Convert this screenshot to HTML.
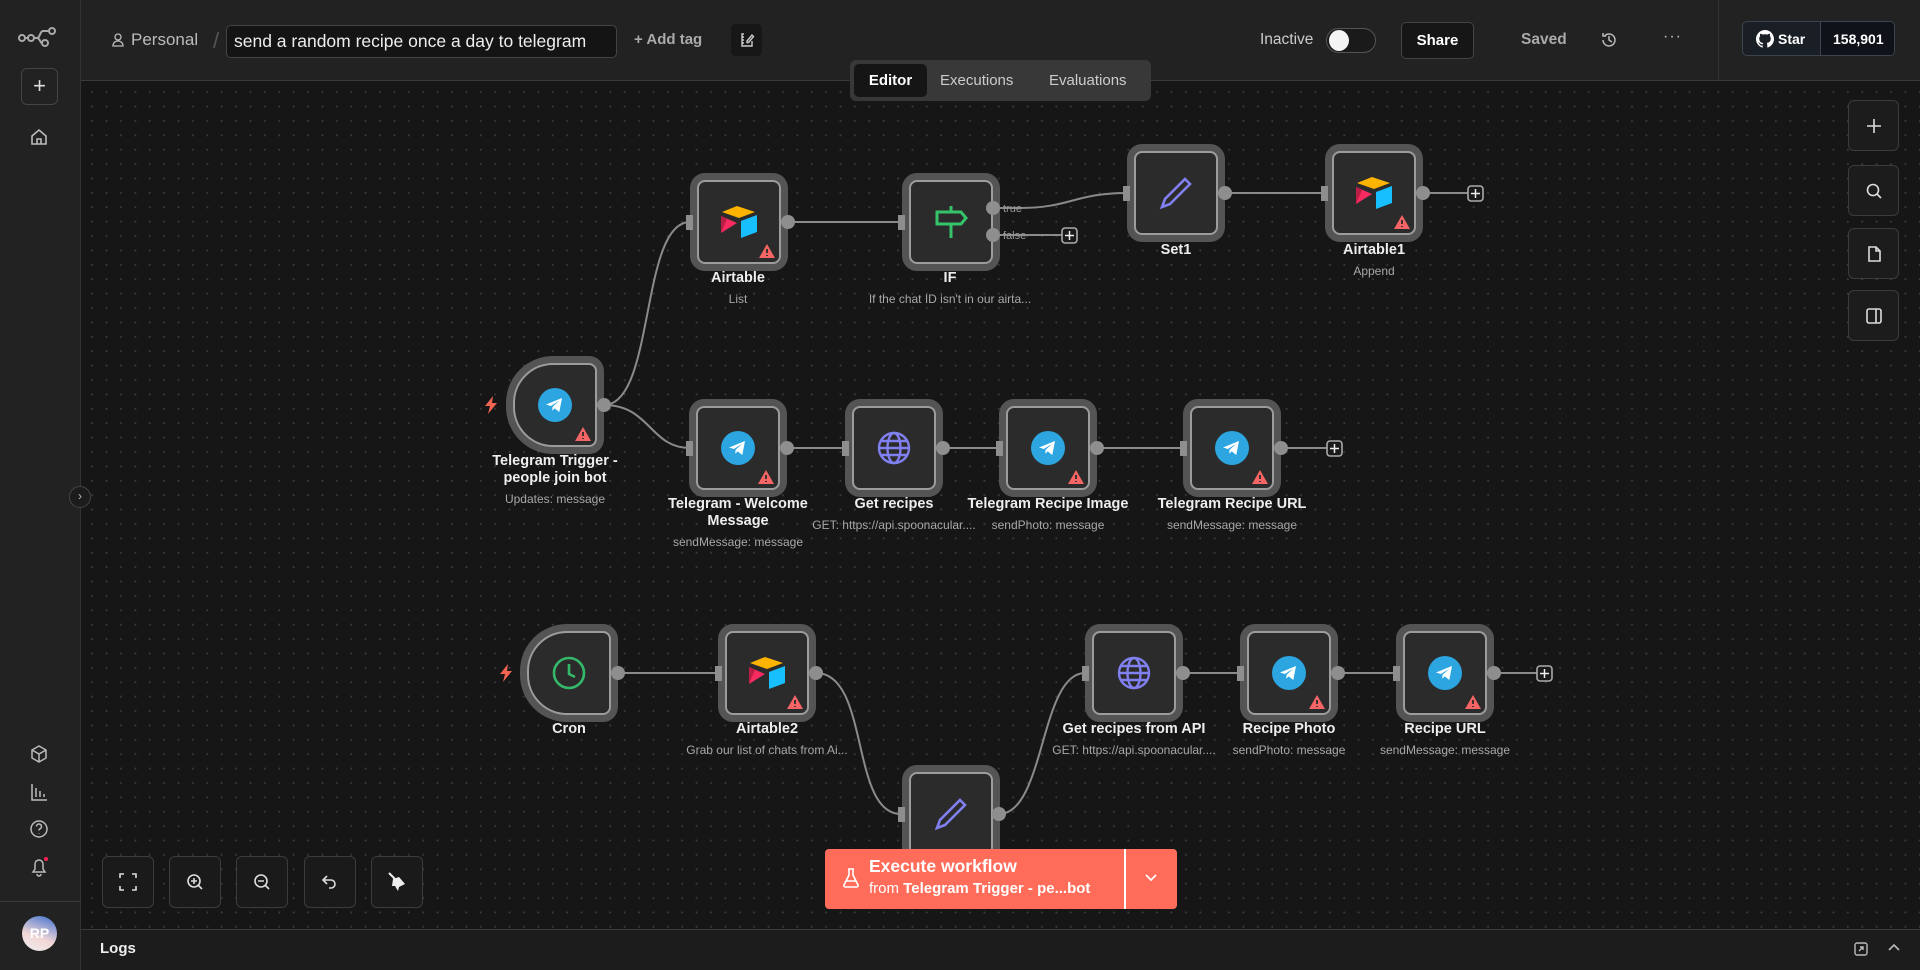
<!DOCTYPE html>
<html><head><meta charset="utf-8"><style>
*{box-sizing:border-box;margin:0;padding:0}
body{width:1920px;height:970px;overflow:hidden;background:#141414;font-family:"Liberation Sans",sans-serif;color:#ddd;position:relative}
.abs{position:absolute}
#side{left:0;top:0;width:81px;height:970px;background:#222;border-right:1px solid #333}
#head{left:81px;top:0;width:1839px;height:81px;background:#222;border-bottom:1px solid #3a3a3a}
#canvas{left:81px;top:81px;width:1839px;height:848px;background-color:#161616;background-image:radial-gradient(circle,#393939 0.9px,transparent 1.2px);background-size:14.4px 14.4px;background-position:4px 4px}
#logs{left:81px;top:929px;width:1839px;height:41px;background:#1c1c1c;border-top:1px solid #3a3a3a}
.node{position:absolute;width:84px;height:84px;background:#2b2b2b;border:2px solid #9c9c9c;border-radius:8px;box-shadow:0 0 0 7px #545454;display:flex;align-items:center;justify-content:center}
.trig{border-radius:40px 8px 8px 40px}
.lbl{position:absolute;width:200px;text-align:center;font-size:14.5px;font-weight:bold;color:#eee;line-height:17px}
.sub{display:block;font-size:12px;font-weight:normal;color:#a8a8a8;margin-top:4px}
.warn{position:absolute;right:3px;bottom:3px}
.btn{position:absolute;width:52px;height:52px;border:1px solid #3c3c3c;border-radius:6px;background:#1a1a1a;display:flex;align-items:center;justify-content:center}
.rbtn{position:absolute;left:1848px;width:51px;height:51px;border:1px solid #3c3c3c;border-radius:6px;background:#1c1c1c;display:flex;align-items:center;justify-content:center}
</style></head><body>
<div id="side" class="abs"></div>
<div id="head" class="abs"></div>
<div id="canvas" class="abs"></div>
<div id="logs" class="abs"></div>

<!-- sidebar icons -->
<svg class="abs" style="left:18px;top:26px" width="42" height="22" viewBox="0 0 42 22" fill="none" stroke="#aaa" stroke-width="2"><circle cx="4" cy="12" r="3"/><circle cx="13" cy="12" r="3"/><circle cx="27" cy="17" r="3"/><circle cx="34" cy="5" r="3"/><path d="M7 12h3M16 12h3c3 0 3-7 6-7h6M19 12c3 0 3 5 5 5"/></svg>
<div class="abs" style="left:21px;top:68px;width:37px;height:37px;border:1px solid #444;border-radius:6px;color:#ddd;font-size:22px;text-align:center;line-height:34px">+</div>
<svg class="abs" style="left:30px;top:128px" width="18" height="18" viewBox="0 0 18 18" fill="none" stroke="#bbb" stroke-width="1.6"><path d="M2 8l7-6 7 6v8H2z M7 16v-5h4v5"/></svg>
<svg class="abs" style="left:29px;top:744px" width="20" height="20" viewBox="0 0 20 20" fill="none" stroke="#bbb" stroke-width="1.5"><path d="M10 2l7 4v8l-7 4-7-4V6z M3 6l7 4 7-4 M10 10v8"/></svg>
<svg class="abs" style="left:29px;top:782px" width="20" height="20" viewBox="0 0 20 20" fill="none" stroke="#bbb" stroke-width="1.5"><path d="M3 2v16h15 M7 6v9 M11 9v6 M15 12v3"/></svg>
<svg class="abs" style="left:29px;top:819px" width="20" height="20" viewBox="0 0 20 20" fill="none" stroke="#bbb" stroke-width="1.5"><circle cx="10" cy="10" r="8"/><path d="M7.5 7.5a2.5 2.5 0 1 1 3.5 2.3c-.8.4-1 1-1 1.7M10 14v.5"/></svg>
<svg class="abs" style="left:29px;top:856px" width="22" height="22" viewBox="0 0 22 22" fill="none" stroke="#bbb" stroke-width="1.5"><path d="M4 16h12l-2-3V8a4 4 0 0 0-8 0v5z M8 18a2 2 0 0 0 4 0"/><circle cx="17" cy="3" r="2" fill="#f25" stroke="none"/></svg>
<div class="abs" style="left:0;top:901px;width:81px;height:1px;background:#3a3a3a"></div>
<div class="abs" style="left:22px;top:916px;width:35px;height:35px;border-radius:50%;background:linear-gradient(200deg,#3b6fd0,#f2d6d6 60%,#eee);color:#fff;font-weight:bold;font-size:14px;text-align:center;line-height:35px">RP</div>

<!-- header -->
<svg class="abs" style="left:112px;top:33px" width="12" height="14" viewBox="0 0 12 14" fill="none" stroke="#bbb" stroke-width="1.3"><circle cx="6" cy="4" r="3"/><path d="M1 13c0-3 2-5 5-5s5 2 5 5z"/></svg>
<div class="abs" style="left:131px;top:30px;font-size:17px;color:#bbb">Personal</div>
<div class="abs" style="left:213px;top:28px;font-size:22px;color:#555">/</div>
<div class="abs" style="left:226px;top:25px;width:391px;height:33px;border:1px solid #444;border-radius:5px;background:#141414;color:#eee;font-size:17.5px;line-height:31px;padding-left:7px;white-space:nowrap">send a random recipe once a day to telegram</div>
<div class="abs" style="left:634px;top:31px;font-size:15px;font-weight:bold;color:#aaa">+ Add tag</div>
<div class="abs" style="left:731px;top:24px;width:31px;height:32px;background:#171717;border-radius:5px"></div>
<svg class="abs" style="left:739px;top:32px" width="16" height="16" viewBox="0 0 16 16" fill="none" stroke="#ccc" stroke-width="1.4"><path d="M5 2H3v12h10V9 M3 5h2 M3 8h2 M3 11h2 M8 9l5-6 1.5 1.5-5 6H8z"/></svg>

<div class="abs" style="left:850px;top:60px;width:301px;height:41px;background:#383838;border-radius:6px"></div>
<div class="abs" style="left:854px;top:64px;width:73px;height:33px;background:#151515;border-radius:5px;color:#fff;font-weight:bold;font-size:15px;text-align:center;line-height:33px">Editor</div>
<div class="abs" style="left:940px;top:72px;font-size:15px;color:#ccc">Executions</div>
<div class="abs" style="left:1049px;top:72px;font-size:15px;color:#ccc">Evaluations</div>

<div class="abs" style="left:1260px;top:31px;font-size:15.5px;color:#ccc">Inactive</div>
<div class="abs" style="left:1326px;top:28px;width:50px;height:25px;border:1px solid #555;border-radius:13px;background:#1a1a1a"></div>
<div class="abs" style="left:1329px;top:30px;width:20px;height:21px;border-radius:50%;background:#f4f4f4"></div>
<div class="abs" style="left:1401px;top:22px;width:73px;height:37px;border:1px solid #444;border-radius:5px;background:#161616;color:#fff;font-weight:bold;font-size:15px;text-align:center;line-height:35px">Share</div>
<div class="abs" style="left:1521px;top:31px;font-size:15.5px;color:#aaa;font-weight:bold">Saved</div>
<svg class="abs" style="left:1600px;top:31px" width="18" height="18" viewBox="0 0 18 18" fill="none" stroke="#bbb" stroke-width="1.5"><path d="M3 9a6 6 0 1 0 2-4.5 M3 2v3h3 M9 5v4l3 2"/></svg>
<div class="abs" style="left:1663px;top:28px;font-size:16px;color:#bbb;letter-spacing:1px">···</div>
<div class="abs" style="left:1718px;top:0;width:1px;height:80px;background:#333"></div>
<div class="abs" style="left:1742px;top:21px;width:153px;height:35px;border:1px solid #3d4450;border-radius:5px;background:#1a1e25;overflow:hidden">
 <div class="abs" style="left:77px;top:0;width:76px;height:35px;background:#0f1218;border-left:1px solid #3d4450"></div>
 <svg class="abs" style="left:13px;top:8px" width="18" height="18" viewBox="0 0 16 16"><path fill="#fff" d="M8 0C3.6 0 0 3.6 0 8c0 3.5 2.3 6.5 5.5 7.6.4.1.5-.2.5-.4v-1.4c-2.2.5-2.7-1-2.7-1-.4-.9-.9-1.2-.9-1.2-.7-.5.1-.5.1-.5.8.1 1.2.8 1.200.8.7 1.2 1.9.9 2.3.7.1-.5.3-.9.5-1.1-1.800-.2-3.6-.9-3.6-4 0-.9.3-1.6.8-2.1-.1-.2-.4-1 .1-2.1 0 0 .7-.2 2.2.8.6-.2 1.3-.3 2-.3s1.4.1 2 .3c1.5-1 2.2-.8 2.2-.8.4 1.1.2 1.9.1 2.1.5.6.8 1.3.8 2.1 0 3.1-1.9 3.7-3.6 3.9.3.3.5.8.5 1.5v2.2c0 .2.1.5.6.4C13.7 14.5 16 11.5 16 8c0-4.4-3.6-8-8-8z"/></svg>
 <div class="abs" style="left:35px;top:9px;font-size:14px;font-weight:bold;color:#fff">Star</div>
 <div class="abs" style="left:90px;top:9px;font-size:14px;font-weight:bold;color:#fff">158,901</div>
</div>

<!-- right canvas buttons -->
<div class="rbtn" style="top:100px"><svg width="18" height="18" viewBox="0 0 18 18" stroke="#ddd" stroke-width="1.6"><path d="M9 2v14M2 9h14"/></svg></div>
<div class="rbtn" style="top:165px"><svg width="18" height="18" viewBox="0 0 18 18" fill="none" stroke="#ddd" stroke-width="1.6"><circle cx="8" cy="8" r="5.5"/><path d="M12 12l4 4"/></svg></div>
<div class="rbtn" style="top:228px"><svg width="18" height="18" viewBox="0 0 18 18" fill="none" stroke="#ddd" stroke-width="1.6"><path d="M4 2h7l4 4v10H4z M11 2v4h4"/></svg></div>
<div class="rbtn" style="top:290px"><svg width="18" height="18" viewBox="0 0 18 18" fill="none" stroke="#ddd" stroke-width="1.6"><rect x="2" y="2" width="14" height="14" rx="2"/><path d="M11 2v14"/></svg></div>

<div class="abs" style="left:69px;top:486px;width:22px;height:22px;border:1px solid #444;border-radius:50%;background:#1c1c1c;color:#bbb;font-size:12px;text-align:center;line-height:19px">›</div>

<!-- edges -->
<svg class="abs" style="left:0;top:0" width="1920" height="970" fill="none" stroke="#8a8a8a" stroke-width="2">
<path d="M604 405 C655 405 640 222 690 222"/>
<path d="M604 405 C650 405 650 448 690 448"/>
<path d="M788 222 H901"/>
<path d="M1020 208 C1070 208 1075 193 1127 193"/>
<path d="M1024 235 H1062"/>
<path d="M1225 193 H1325"/>
<path d="M1423 193 H1468"/>
<path d="M787 448 H845 M943 448 H999 M1097 448 H1183 M1281 448 H1327"/>
<path d="M618 673 H718"/>
<path d="M816 673 C870 673 850 814 901 814"/>
<path d="M999 814 C1045 814 1040 673 1085 673"/>
<path d="M1183 673 H1240 M1338 673 H1396 M1494 673 H1537"/>
<g stroke="#aaa" stroke-width="1.6" fill="#1a1a1a"><rect x="1062" y="228" width="15" height="15" rx="3"/><rect x="1468" y="186" width="15" height="15" rx="3"/><rect x="1327" y="441" width="15" height="15" rx="3"/><rect x="1537" y="666" width="15" height="15" rx="3"/></g>
<g stroke="#eee" stroke-width="1.5"><path d="M1069.5 231v9M1065 235.5h9 M1475.5 189v9M1471 193.5h9 M1334.5 444v9M1330 448.5h9 M1544.5 669v9M1540 673.5h9"/></g>
</svg>

<!-- nodes -->
<div class="node" style="left:697px;top:180px"><svg width="40" height="36" viewBox="0 0 40 36"><path d="M18 2 L36 8 L20 14 L3 8Z" fill="#fcb400"/><path d="M22 17 L38 11 V28 L22 34Z" fill="#18bfff"/><path d="M2 12 L18 19 L2 29Z" fill="#f82b60"/><path d="M2 12 L8 15 L2 29Z" fill="#ba1e45"/></svg><svg class="warn" width="18" height="16" viewBox="0 0 18 16"><path d="M9 1L17 15H1Z" fill="#f56565"/><path d="M9 6v4M9 12v1" stroke="#2b2b2b" stroke-width="1.8"/></svg></div>
<div class="lbl" style="left:638px;top:270px">Airtable<span class="sub">List</span></div>

<div class="node" style="left:909px;top:180px"><svg width="40" height="40" viewBox="0 0 40 40" fill="none" stroke="#35c46a" stroke-width="3"><path d="M20 4v6 M20 22v14 M6 10h24l5 6-5 6H6z"/></svg></div>
<div class="lbl" style="left:800px;top:270px;width:300px">IF<span class="sub">If the chat ID isn't in our airta...</span></div>

<div class="node" style="left:1134px;top:151px"><svg width="36" height="36" viewBox="0 0 36 36" fill="none" stroke="#8080f0" stroke-width="2.6"><path d="M27 4l5 5L12 29l-8 3 3-8z"/></svg></div>
<div class="lbl" style="left:1076px;top:242px">Set1</div>

<div class="node" style="left:1332px;top:151px"><svg width="40" height="36" viewBox="0 0 40 36"><path d="M18 2 L36 8 L20 14 L3 8Z" fill="#fcb400"/><path d="M22 17 L38 11 V28 L22 34Z" fill="#18bfff"/><path d="M2 12 L18 19 L2 29Z" fill="#f82b60"/><path d="M2 12 L8 15 L2 29Z" fill="#ba1e45"/></svg><svg class="warn" width="18" height="16" viewBox="0 0 18 16"><path d="M9 1L17 15H1Z" fill="#f56565"/><path d="M9 6v4M9 12v1" stroke="#2b2b2b" stroke-width="1.8"/></svg></div>
<div class="lbl" style="left:1274px;top:242px">Airtable1<span class="sub">Append</span></div>

<div class="node trig" style="left:513px;top:363px"><svg width="34" height="34" viewBox="0 0 34 34"><circle cx="17" cy="17" r="17" fill="#2ca5e0"/><path d="M8 16.5l16-6.5-2.7 14-4.6-3.6-2.5 2.4.4-4 6.6-6-8.3 5.2z" fill="#fff"/></svg><svg class="warn" width="18" height="16" viewBox="0 0 18 16"><path d="M9 1L17 15H1Z" fill="#f56565"/><path d="M9 6v4M9 12v1" stroke="#2b2b2b" stroke-width="1.8"/></svg></div>
<svg class="abs" style="left:484px;top:396px" width="14" height="18" viewBox="0 0 14 18"><path d="M9 0L1 10h5l-2 8 9-11H8z" fill="#f06452"/></svg>
<div class="lbl" style="left:455px;top:453px">Telegram Trigger -<br>people join bot<span class="sub">Updates: message</span></div>

<div class="node" style="left:696px;top:406px"><svg width="34" height="34" viewBox="0 0 34 34"><circle cx="17" cy="17" r="17" fill="#2ca5e0"/><path d="M8 16.5l16-6.5-2.7 14-4.6-3.6-2.5 2.4.4-4 6.6-6-8.3 5.2z" fill="#fff"/></svg><svg class="warn" width="18" height="16" viewBox="0 0 18 16"><path d="M9 1L17 15H1Z" fill="#f56565"/><path d="M9 6v4M9 12v1" stroke="#2b2b2b" stroke-width="1.8"/></svg></div>
<div class="lbl" style="left:638px;top:496px">Telegram - Welcome<br>Message<span class="sub">sendMessage: message</span></div>

<div class="node" style="left:852px;top:406px"><svg width="36" height="36" viewBox="0 0 36 36" fill="none" stroke="#8080f0" stroke-width="2.4"><circle cx="18" cy="18" r="15"/><ellipse cx="18" cy="18" rx="6.5" ry="15"/><path d="M3 18h30 M5 11h26 M5 25h26"/></svg></div>
<div class="lbl" style="left:744px;top:496px;width:300px">Get recipes<span class="sub">GET: https://api.spoonacular....</span></div>

<div class="node" style="left:1006px;top:406px"><svg width="34" height="34" viewBox="0 0 34 34"><circle cx="17" cy="17" r="17" fill="#2ca5e0"/><path d="M8 16.5l16-6.5-2.7 14-4.6-3.6-2.5 2.4.4-4 6.6-6-8.3 5.2z" fill="#fff"/></svg><svg class="warn" width="18" height="16" viewBox="0 0 18 16"><path d="M9 1L17 15H1Z" fill="#f56565"/><path d="M9 6v4M9 12v1" stroke="#2b2b2b" stroke-width="1.8"/></svg></div>
<div class="lbl" style="left:938px;top:496px;width:220px">Telegram Recipe Image<span class="sub">sendPhoto: message</span></div>

<div class="node" style="left:1190px;top:406px"><svg width="34" height="34" viewBox="0 0 34 34"><circle cx="17" cy="17" r="17" fill="#2ca5e0"/><path d="M8 16.5l16-6.5-2.7 14-4.6-3.6-2.5 2.4.4-4 6.6-6-8.3 5.2z" fill="#fff"/></svg><svg class="warn" width="18" height="16" viewBox="0 0 18 16"><path d="M9 1L17 15H1Z" fill="#f56565"/><path d="M9 6v4M9 12v1" stroke="#2b2b2b" stroke-width="1.8"/></svg></div>
<div class="lbl" style="left:1122px;top:496px;width:220px">Telegram Recipe URL<span class="sub">sendMessage: message</span></div>

<div class="node trig" style="left:527px;top:631px"><svg width="36" height="36" viewBox="0 0 36 36" fill="none" stroke="#35b86a" stroke-width="2.6"><circle cx="18" cy="18" r="15"/><path d="M18 9v10l6 3"/></svg></div>
<svg class="abs" style="left:499px;top:664px" width="14" height="18" viewBox="0 0 14 18"><path d="M9 0L1 10h5l-2 8 9-11H8z" fill="#f06452"/></svg>
<div class="lbl" style="left:469px;top:721px">Cron</div>

<div class="node" style="left:725px;top:631px"><svg width="40" height="36" viewBox="0 0 40 36"><path d="M18 2 L36 8 L20 14 L3 8Z" fill="#fcb400"/><path d="M22 17 L38 11 V28 L22 34Z" fill="#18bfff"/><path d="M2 12 L18 19 L2 29Z" fill="#f82b60"/><path d="M2 12 L8 15 L2 29Z" fill="#ba1e45"/></svg><svg class="warn" width="18" height="16" viewBox="0 0 18 16"><path d="M9 1L17 15H1Z" fill="#f56565"/><path d="M9 6v4M9 12v1" stroke="#2b2b2b" stroke-width="1.8"/></svg></div>
<div class="lbl" style="left:617px;top:721px;width:300px">Airtable2<span class="sub">Grab our list of chats from Ai...</span></div>

<div class="node" style="left:909px;top:772px"><svg width="36" height="36" viewBox="0 0 36 36" fill="none" stroke="#8080f0" stroke-width="2.6"><path d="M27 4l5 5L12 29l-8 3 3-8z"/></svg></div>

<div class="node" style="left:1092px;top:631px"><svg width="36" height="36" viewBox="0 0 36 36" fill="none" stroke="#8080f0" stroke-width="2.4"><circle cx="18" cy="18" r="15"/><ellipse cx="18" cy="18" rx="6.5" ry="15"/><path d="M3 18h30 M5 11h26 M5 25h26"/></svg></div>
<div class="lbl" style="left:984px;top:721px;width:300px">Get recipes from API<span class="sub">GET: https://api.spoonacular....</span></div>

<div class="node" style="left:1247px;top:631px"><svg width="34" height="34" viewBox="0 0 34 34"><circle cx="17" cy="17" r="17" fill="#2ca5e0"/><path d="M8 16.5l16-6.5-2.7 14-4.6-3.6-2.5 2.4.4-4 6.6-6-8.3 5.2z" fill="#fff"/></svg><svg class="warn" width="18" height="16" viewBox="0 0 18 16"><path d="M9 1L17 15H1Z" fill="#f56565"/><path d="M9 6v4M9 12v1" stroke="#2b2b2b" stroke-width="1.8"/></svg></div>
<div class="lbl" style="left:1189px;top:721px">Recipe Photo<span class="sub">sendPhoto: message</span></div>

<div class="node" style="left:1403px;top:631px"><svg width="34" height="34" viewBox="0 0 34 34"><circle cx="17" cy="17" r="17" fill="#2ca5e0"/><path d="M8 16.5l16-6.5-2.7 14-4.6-3.6-2.5 2.4.4-4 6.6-6-8.3 5.2z" fill="#fff"/></svg><svg class="warn" width="18" height="16" viewBox="0 0 18 16"><path d="M9 1L17 15H1Z" fill="#f56565"/><path d="M9 6v4M9 12v1" stroke="#2b2b2b" stroke-width="1.8"/></svg></div>
<div class="lbl" style="left:1345px;top:721px">Recipe URL<span class="sub">sendMessage: message</span></div>

<!-- ports on top -->
<svg class="abs" style="left:0;top:0" width="1920" height="970">
<g stroke="#8a8a8a" stroke-width="2"><path d="M1000 208 H1020 M1000 235 H1024"/></g>
<g fill="#8e8e8e">
<circle cx="604" cy="405" r="7"/><circle cx="788" cy="222" r="7"/><circle cx="993" cy="208" r="7"/><circle cx="993" cy="235" r="7"/><circle cx="1225" cy="193" r="7"/><circle cx="1423" cy="193" r="7"/>
<circle cx="787" cy="448" r="7"/><circle cx="943" cy="448" r="7"/><circle cx="1097" cy="448" r="7"/><circle cx="1281" cy="448" r="7"/>
<circle cx="618" cy="673" r="7"/><circle cx="816" cy="673" r="7"/><circle cx="999" cy="814" r="7"/><circle cx="1183" cy="673" r="7"/><circle cx="1338" cy="673" r="7"/><circle cx="1494" cy="673" r="7"/>
<rect x="686" y="215" width="7" height="15"/><rect x="898" y="215" width="7" height="15"/><rect x="1123" y="186" width="7" height="15"/><rect x="1321" y="186" width="7" height="15"/>
<rect x="686" y="441" width="7" height="15"/><rect x="842" y="441" width="7" height="15"/><rect x="996" y="441" width="7" height="15"/><rect x="1180" y="441" width="7" height="15"/>
<rect x="715" y="666" width="7" height="15"/><rect x="898" y="807" width="7" height="15"/><rect x="1082" y="666" width="7" height="15"/><rect x="1237" y="666" width="7" height="15"/><rect x="1393" y="666" width="7" height="15"/>
</g>
<g fill="#999" font-family="Liberation Sans" font-size="11"><text x="1003" y="212">true</text><text x="1003" y="239">false</text></g>
</svg>

<!-- zoom controls -->
<div class="btn" style="left:102px;top:856px"><svg width="20" height="20" viewBox="0 0 20 20" fill="none" stroke="#ddd" stroke-width="1.6"><path d="M2 6V2h4 M14 2h4v4 M18 14v4h-4 M6 18H2v-4"/></svg></div>
<div class="btn" style="left:169px;top:856px"><svg width="20" height="20" viewBox="0 0 20 20" fill="none" stroke="#ddd" stroke-width="1.6"><circle cx="9" cy="9" r="6"/><path d="M13.5 13.5L17 17 M9 6v6M6 9h6"/></svg></div>
<div class="btn" style="left:236px;top:856px"><svg width="20" height="20" viewBox="0 0 20 20" fill="none" stroke="#ddd" stroke-width="1.6"><circle cx="9" cy="9" r="6"/><path d="M13.5 13.5L17 17 M6 9h6"/></svg></div>
<div class="btn" style="left:304px;top:856px"><svg width="20" height="20" viewBox="0 0 20 20" fill="none" stroke="#ddd" stroke-width="1.6"><path d="M7 4L3 8l4 4 M3 8h8a4 4 0 0 1 0 8H9"/></svg></div>
<div class="btn" style="left:371px;top:856px"><svg width="22" height="22" viewBox="0 0 22 22"><path d="M3 2l6 6" stroke="#eee" stroke-width="2"/><path d="M7 8l6-2 6 7-6 3-1 4-3-5-3 0z" fill="#eee"/></svg></div>

<!-- execute -->
<div class="abs" style="left:825px;top:849px;width:352px;height:60px;background:#ff6d5a;border-radius:4px"></div>
<div class="abs" style="left:1124px;top:849px;width:2px;height:60px;background:#fff"></div>
<svg class="abs" style="left:843px;top:868px" width="16" height="20" viewBox="0 0 16 20" fill="none" stroke="#fff" stroke-width="1.6"><path d="M5 1h6 M6 1v6L1 17a1.5 1.5 0 0 0 1.3 2h11.4A1.5 1.5 0 0 0 15 17L10 7V1 M3 13h10"/></svg>
<div class="abs" style="left:869px;top:856px;font-size:17.5px;color:#fff;font-weight:bold">Execute workflow</div>
<div class="abs" style="left:869px;top:880px;font-size:15px;color:#fff">from <b>Telegram Trigger - pe...bot</b></div>
<svg class="abs" style="left:1144px;top:873px" width="14" height="10" viewBox="0 0 14 10" fill="none" stroke="#fff" stroke-width="1.8"><path d="M2 2l5 5 5-5"/></svg>

<!-- logs -->
<div class="abs" style="left:100px;top:940px;font-size:15px;font-weight:bold;color:#eee">Logs</div>
<svg class="abs" style="left:1853px;top:941px" width="16" height="16" viewBox="0 0 16 16" fill="none" stroke="#bbb" stroke-width="1.4"><rect x="2" y="2" width="12" height="12" rx="2"/><path d="M6 10l4-4 M7 6h3v3"/></svg>
<svg class="abs" style="left:1887px;top:943px" width="14" height="10" viewBox="0 0 14 10" fill="none" stroke="#bbb" stroke-width="1.6"><path d="M2 7l5-5 5 5"/></svg>
</body></html>
